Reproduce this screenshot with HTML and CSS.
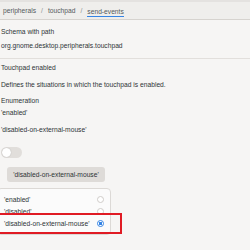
FILE: index.html
```html
<!DOCTYPE html>
<html lang="en">
<head>
    <meta charset="UTF-8">
    <title>send-events</title>
    <link rel="stylesheet" href="styles.css">
</head>
<body>
    <div class="pathbar">
        <span class="crumb">peripherals</span>
        <span class="sep">/</span>
        <span class="crumb">touchpad</span>
        <span class="sep">/</span>
        <span class="crumb current">send-events</span>
    </div>

    <div class="section">
        <div class="line">Schema with path</div>
        <div class="line">org.gnome.desktop.peripherals.touchpad</div>
    </div>

    <div class="section details">
        <div class="line">Touchpad enabled</div>
        <div class="line desc">Defines the situations in which the touchpad is enabled.</div>
        <div class="line type">Enumeration</div>
        <div class="line">'enabled'</div>
        <div class="line value">'disabled-on-external-mouse'</div>

        <div class="switch"><div class="knob"></div></div>

        <button class="combo">'disabled-on-external-mouse'</button>

        <div class="popover">
            <div class="option">
                <span>'enabled'</span>
                <span class="radio"></span>
            </div>
            <div class="option">
                <span>'disabled'</span>
                <span class="radio"></span>
            </div>
            <div class="option">
                <span>'disabled-on-external-mouse'</span>
                <span class="radio checked"></span>
            </div>
            <div class="highlight"></div>
        </div>
    </div>
</body>
</html>
```

FILE: styles.css
```css
body {
    margin: 0;
    background: #f6f5f4;
    color: #2e3436;
    font-family: "Liberation Sans", sans-serif;
    font-size: 6.7px;
    overflow: hidden;
}

.pathbar {
    height: 20px;
    box-sizing: border-box;
    display: flex;
    align-items: center;
    padding-left: 3px;
    background: #efeeec;
    border-top: 2px solid #e4e2e0;
    border-bottom: 1px solid #d6d3cf;
    color: #555a5c;
}

.sep {
    margin: 0 5px;
    color: #8b8e8f;
}

.crumb.current {
    padding-bottom: 1px;
    border-bottom: 1.5px solid #3584e4;
    margin-bottom: -3px;
}

.section {
    padding: 5px 0 5px 1px;
    border-bottom: 1px solid #e2dfdc;
}

.line {
    line-height: 14px;
    white-space: nowrap;
}

.details {
    border-bottom: none;
    padding-top: 3px;
}

.details .line {
    line-height: 12px;
}

.details .desc,
.details .value {
    margin-top: 5px;
}

.details .type {
    margin-top: 4px;
}

.switch {
    margin-top: 11px;
    width: 21px;
    height: 11px;
    border-radius: 6px;
    background: #e1dedb;
    box-sizing: border-box;
    padding: 1px;
}

.knob {
    width: 9px;
    height: 9px;
    border-radius: 50%;
    background: #ffffff;
    box-shadow: 0 0 1px rgba(0, 0, 0, 0.3);
}

.combo {
    display: block;
    margin: 9px 0 0 6px;
    width: 98px;
    height: 15px;
    border: none;
    border-radius: 3px;
    background: #dedbd8;
    color: #2e3436;
    font-family: inherit;
    font-size: 6.7px;
    padding: 0;
}

.popover {
    position: relative;
    margin: 6px 0 0 -4px;
    width: 114px;
    box-sizing: border-box;
    padding: 4px 6px 5px 6px;
    background: #fbfbfb;
    border: 1px solid #dcd9d6;
    border-radius: 4px;
}

.option {
    height: 12px;
    display: flex;
    align-items: center;
    justify-content: space-between;
    white-space: nowrap;
}

.radio {
    width: 7px;
    height: 7px;
    box-sizing: border-box;
    border-radius: 50%;
    border: 1px solid #cfccc9;
    background: #ffffff;
}

.radio.checked {
    border: 1.5px solid #3584e4;
    background: radial-gradient(circle, #3584e4 0 1.5px, #ffffff 2px);
}

.highlight {
    position: absolute;
    left: -4px;
    top: 24px;
    width: 128px;
    height: 21px;
    box-sizing: border-box;
    border: 2px solid #e01b24;
}
```
